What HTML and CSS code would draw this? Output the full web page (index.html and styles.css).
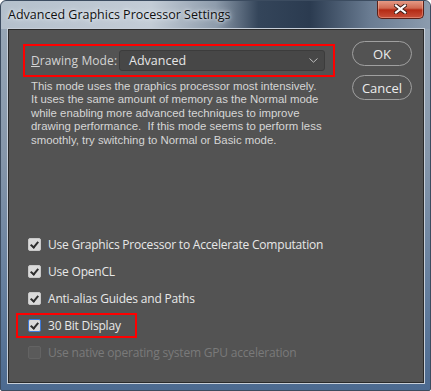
FILE: index.html
```html
<!DOCTYPE html>
<html>
	<head>
		<title>Advanced Graphics Processor Settings</title>
		<link rel="stylesheet" href="styles.css">
	</head>
	<body>
		<div class="window">
			<div class="titlebar">
				<span class="title">Advanced Graphics Processor Settings</span>
				<div class="close">
					<svg width="13" height="10" viewBox="0 0 13 10"><path d="M2 1.5 L11 8.5 M11 1.5 L2 8.5" stroke="#3a1a14" stroke-width="4" stroke-linecap="square"/><path d="M2 1.5 L11 8.5 M11 1.5 L2 8.5" stroke="#ffffff" stroke-width="2.2" stroke-linecap="square"/></svg>
				</div>
			</div>
			<div class="client">
				<div class="main">
					<div class="mode highlight">
						<span class="label"><u>D</u>rawing Mode:</span>
						<div class="select">
							<span>Advanced</span>
							<svg width="9" height="5" viewBox="0 0 9 5"><path d="M0.5 0.5 L4.5 4.2 L8.5 0.5" stroke="#bdbdbd" fill="none" stroke-width="1"/></svg>
						</div>
					</div>
					<div class="desc">
						<div>This mode uses the graphics processor most intensively.</div>
						<div>It uses the same amount of memory as the Normal mode</div>
						<div>while enabling more advanced techniques to improve</div>
						<div>drawing performance.&nbsp; If this mode seems to perform less</div>
						<div>smoothly, try switching to Normal or Basic mode.</div>
					</div>
					<div class="options">
						<div class="option"><span class="box checked"></span>Use Graphics Processor to Accelerate Computation</div>
						<div class="option"><span class="box checked"></span>Use OpenCL</div>
						<div class="option"><span class="box checked"></span>Anti-alias Guides and Paths</div>
						<div class="option highlight focused"><span class="box checked"></span>30 Bit Display</div>
						<div class="option disabled"><span class="box"></span>Use native operating system GPU acceleration</div>
					</div>
				</div>
				<div class="buttons">
					<div class="button">OK</div>
					<div class="button">Cancel</div>
				</div>
			</div>
		</div>
	</body>
</html>
```

FILE: styles.css
```css
body
{
	margin: 0;
	background: #ffffff;
	font-family: "Open Sans", "DejaVu Sans", sans-serif;
}

.window
{
	width: 431px;
	height: 391px;
	box-sizing: border-box;
	padding: 0 6px 7px 7px;
	border: 1px solid #3c4c60;
	border-radius: 6px 6px 2px 2px;
	background: linear-gradient(to bottom, #9aa9b8 0%, #8596aa 40%, #5f7a9b 80%, #4c6a90 100%);
	display: flex;
	flex-direction: column;
	overflow: hidden;
}

.titlebar
{
	height: 28px;
	flex-shrink: 0;
	margin: 0 -6px 0 -7px;
	padding: 0 6px 0 7px;
	display: flex;
	align-items: flex-start;
	justify-content: space-between;
	background: linear-gradient(to right, #b4c0cc 0%, #c3ccd6 35%, #8e9cac 50%, #34455a 60%, #2b3b50 72%, #6a7c92 86%, #8c9cae 100%);
	border-radius: 6px 6px 0 0;
}

.title
{
	margin-top: 5px;
	font-size: 12.5px;
	color: #101010;
	text-shadow: 0 0 6px #e8eef4, 0 0 3px #e8eef4;
}

.close
{
	width: 47px;
	height: 19px;
	margin-top: -1px;
	box-sizing: border-box;
	border: 1px solid #5a2018;
	border-top: none;
	border-radius: 0 0 5px 5px;
	background: linear-gradient(to bottom, #e8a08c 0%, #d06a52 45%, #b42a14 55%, #c8503a 100%);
	display: flex;
	align-items: center;
	justify-content: center;
	box-shadow: inset 0 0 0 1px rgba(255, 200, 180, 0.4);
}

.client
{
	flex: 1;
	min-height: 0;
	display: flex;
	background: #535353;
	border: 1px solid #2a2a2a;
	box-shadow: 0 0 0 1px #c6ced8;
	padding: 14px 0 0 14px;
}

.main
{
	width: 312px;
	flex-shrink: 0;
}

.highlight
{
	border: 2px solid #ff0000;
}

.mode
{
	height: 29px;
	display: flex;
	align-items: center;
	padding: 0 8px 0 6px;
	color: #d4d4d4;
}

.label
{
	width: 88px;
	flex-shrink: 0;
	font-size: 12px;
	letter-spacing: 0.1px;
	white-space: nowrap;
}

.select
{
	flex: 1;
	height: 21px;
	box-sizing: border-box;
	display: flex;
	align-items: center;
	justify-content: space-between;
	padding: 0 6px 0 9px;
	background: #474747;
	border: 1px solid #3c3c3c;
	border-radius: 3px;
	font-size: 12.5px;
	color: #e6e6e6;
}

.desc
{
	margin: 3px 0 0 8px;
	font-family: "Liberation Sans", Arial, sans-serif;
	font-size: 11.4px;
	color: #d6d6d6;
	white-space: nowrap;
}

.desc div
{
	height: 13.4px;
	line-height: 13.4px;
}

.options
{
	margin-top: 85px;
	margin-left: -7px;
}

.option
{
	height: 21px;
	width: 107px;
	display: flex;
	align-items: center;
	margin-bottom: 2px;
	font-size: 12px;
	letter-spacing: -0.2px;
	color: #e8e8e8;
	white-space: nowrap;
	border: 2px solid transparent;
	padding-left: 10px;
}

.option.highlight
{
	border-color: #ff0000;
}

.box
{
	width: 13px;
	height: 13px;
	box-sizing: border-box;
	margin-right: 7px;
	border-radius: 2px;
	background: #5a5a5a;
	border: 1px solid #636363;
	position: relative;
	flex-shrink: 0;
}

.box.checked
{
	background: #dadada;
	border-color: #c8c8c8;
}

.box.checked::after
{
	content: "";
	position: absolute;
	left: 3px;
	top: 1px;
	width: 3px;
	height: 6px;
	border: solid #2e2e2e;
	border-width: 0 2px 2px 0;
	transform: rotate(40deg);
}

.focused .box
{
	border-color: #3c78d8;
}

.disabled
{
	color: #7a7a7a;
}

.buttons
{
	margin-left: 17px;
	margin-top: -3px;
	display: flex;
	flex-direction: column;
	gap: 9px;
}

.button
{
	width: 60px;
	height: 25px;
	box-sizing: border-box;
	border: 1px solid #a0a0a0;
	border-radius: 13px;
	display: flex;
	align-items: center;
	justify-content: center;
	font-size: 13px;
	color: #ececec;
}
```
